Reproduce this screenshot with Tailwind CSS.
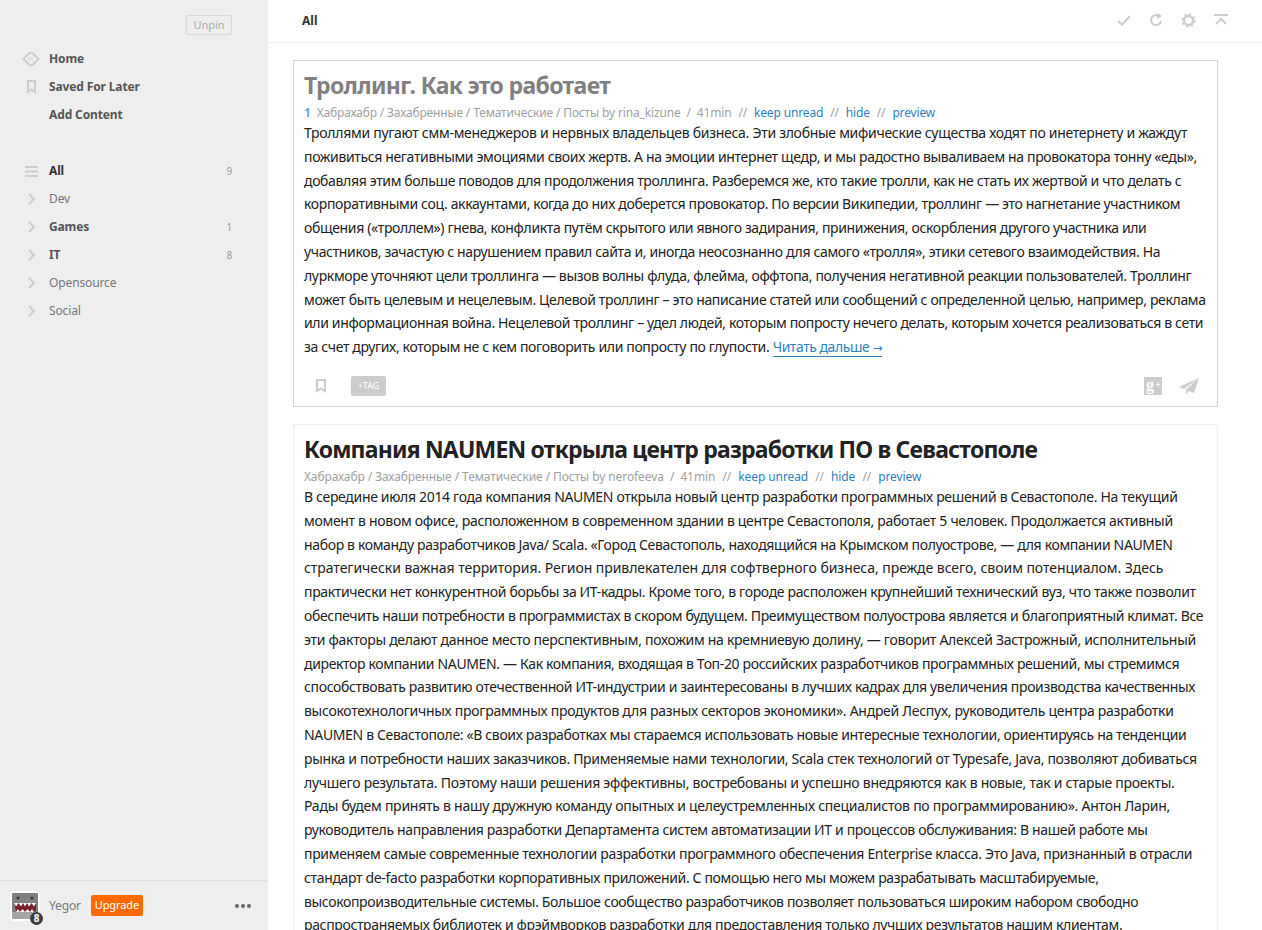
<!DOCTYPE html>
<html lang="ru">
<head>
    <meta charset="UTF-8">
    <title>Feedly</title>
    <script src="https://cdn.jsdelivr.net/npm/@tailwindcss/browser@4"></script>
</head>
<body class="h-screen overflow-hidden flex bg-white font-['Noto_Sans','Open_Sans',sans-serif] text-[#333]">

    <!-- sidebar -->
    <aside class="w-[268px] h-[930px] shrink-0 bg-[#eeeeee] flex flex-col">
        <div class="flex justify-end pr-[36px] pt-[15px]">
            <button class="w-[46px] h-[20px] border border-[#d9d9d9] rounded-[2px] text-[11px] leading-[18px] text-[#aaaaaa]">Unpin</button>
        </div>
        <nav class="mt-[10px] text-[12px] font-bold text-[#555555] tracking-[-0.13px]">
            <a class="flex items-center h-[28px]">
                <span class="w-[49px] flex justify-end pr-[9px]">
                    <svg width="18" height="16" viewBox="0 0 18 16" fill="none" stroke="#cccccc" stroke-width="1.8" stroke-linejoin="round"><path d="M1.500 8 7 2.500Q9 .7 11 2.500L16.500 8 11 13.500Q9 15.300 7 13.500z"/><path d="M8.500 5.500 6 8l2.500 2.500M11.500 5.500 9 8l2.500 2.500" stroke-width="1"/></svg>
                </span>
                Home
            </a>
            <a class="flex items-center h-[28px]">
                <span class="w-[49px] flex justify-end pr-[13px]">
                    <svg width="9" height="14" viewBox="0 0 9 14" fill="none" stroke="#cccccc" stroke-width="2"><path d="M1 1h7v11L4.500 9.500 1 12z"/></svg>
                </span>
                Saved For Later
            </a>
            <a class="flex items-center h-[28px] pl-[49px]">Add Content</a>
        </nav>
        <nav class="mt-[28px] text-[12px] text-[#777777] tracking-[-0.13px]">
            <a class="flex items-center h-[28px] font-bold text-[#333333]">
                <span class="w-[49px] flex justify-end pr-[11px]">
                    <svg width="13" height="11" viewBox="0 0 13 11" fill="#cccccc"><rect width="13" height="2" y="0"/><rect width="13" height="2" y="4.500"/><rect width="13" height="2" y="9"/></svg>
                </span>
                <span class="flex-1">All</span>
                <span class="pr-[36px] text-[10px] font-normal text-[#999999]">9</span>
            </a>
            <a class="flex items-center h-[28px]">
                <span class="w-[49px] flex justify-end pr-[13px]">
                    <svg width="8" height="12" viewBox="0 0 8 12" fill="none" stroke="#cccccc" stroke-width="2"><path d="m1 1 5 5-5 5"/></svg>
                </span>
                <span class="flex-1">Dev</span>
            </a>
            <a class="flex items-center h-[28px] font-bold text-[#555555]">
                <span class="w-[49px] flex justify-end pr-[13px]">
                    <svg width="8" height="12" viewBox="0 0 8 12" fill="none" stroke="#cccccc" stroke-width="2"><path d="m1 1 5 5-5 5"/></svg>
                </span>
                <span class="flex-1">Games</span>
                <span class="pr-[36px] text-[10px] font-normal text-[#999999]">1</span>
            </a>
            <a class="flex items-center h-[28px] font-bold text-[#555555]">
                <span class="w-[49px] flex justify-end pr-[13px]">
                    <svg width="8" height="12" viewBox="0 0 8 12" fill="none" stroke="#cccccc" stroke-width="2"><path d="m1 1 5 5-5 5"/></svg>
                </span>
                <span class="flex-1">IT</span>
                <span class="pr-[36px] text-[10px] font-normal text-[#999999]">8</span>
            </a>
            <a class="flex items-center h-[28px]">
                <span class="w-[49px] flex justify-end pr-[13px]">
                    <svg width="8" height="12" viewBox="0 0 8 12" fill="none" stroke="#cccccc" stroke-width="2"><path d="m1 1 5 5-5 5"/></svg>
                </span>
                <span class="flex-1">Opensource</span>
            </a>
            <a class="flex items-center h-[28px]">
                <span class="w-[49px] flex justify-end pr-[13px]">
                    <svg width="8" height="12" viewBox="0 0 8 12" fill="none" stroke="#cccccc" stroke-width="2"><path d="m1 1 5 5-5 5"/></svg>
                </span>
                <span class="flex-1">Social</span>
            </a>
        </nav>

        <!-- account -->
        <div class="mt-auto h-[50px] border-t border-[#e0e0e0] flex items-center pl-[10px] pr-[17px] text-[12px]">
            <div class="relative w-[30px] h-[30px] bg-white rounded-[3px] p-[2px]">
                <svg width="26" height="26" viewBox="0 0 26 26">
                    <rect width="26" height="26" rx="1" fill="#808080"/>
                    <rect y="19" width="26" height="7" fill="#a6a6a6"/>
                    <circle cx="6" cy="5" r="1.500" fill="#333333"/><circle cx="20" cy="5" r="1.500" fill="#333333"/>
                    <path d="M2 10h22v8l-3 1-2.500-1-2.500 1-2-1-2 1-2.500-1-2.500 1-3-1z" fill="#7a1f2b"/>
                    <path d="m2 10 2 3.500L6.500 10 9 13.500 11 10l2 3.500 2-3.500 2 3.500 2.500-3.500 2.500 3.500 2-3.500z" fill="#ffffff"/>
                    <path d="m4 19 2-3 2 3 2.500-3 2.500 3 2.500-3 2.500 3 2-3 2 3z" fill="#ffffff"/>
                </svg>
                <span class="absolute right-[-3px] bottom-[-4px] w-[13px] h-[13px] rounded-full bg-[#3d3d3d] text-white text-[10px] font-bold leading-[13px] text-center">8</span>
            </div>
            <span class="ml-[9px] text-[#777777] tracking-[-0.13px]">Yegor</span>
            <button class="ml-[10px] w-[52px] h-[21px] bg-[#ff6a00] rounded-[2px] text-white text-[11px] tracking-[-0.1px]">Upgrade</button>
            <span class="ml-auto flex gap-[2px]">
                <i class="w-[4px] h-[4px] rounded-full bg-[#666666]"></i>
                <i class="w-[4px] h-[4px] rounded-full bg-[#666666]"></i>
                <i class="w-[4px] h-[4px] rounded-full bg-[#666666]"></i>
            </span>
        </div>
    </aside>

    <!-- main column -->
    <main class="flex-1 min-w-0">
        <header class="h-[43px] border-b border-[#eeeeee] flex items-center pl-[34px] pr-[34px]">
            <h2 class="text-[12px] font-bold text-[#333333] -mt-[1px]">All</h2>
            <div class="ml-auto flex items-center gap-[18px] -mt-[2px]">
                <svg width="14" height="11" viewBox="0 0 14 11" fill="none" stroke="#cccccc" stroke-width="2"><path d="m1 6 4 3.500L13 1"/></svg>
                <svg width="14" height="14" viewBox="0 0 14 14" fill="none" stroke="#cccccc" stroke-width="2"><path d="M10.500 3.500A5 5 0 1 0 12 8"/><path d="M8 0v6l5-3z" fill="#cccccc" stroke="none"/></svg>
                <svg width="15" height="15" viewBox="0 0 15 15" fill="none" stroke="#cccccc"><circle cx="7.500" cy="7.500" r="4.500" stroke-width="2.400"/><circle cx="7.500" cy="7.500" r="6.200" stroke-width="2" stroke-dasharray="2 2.870"/></svg>
                <svg width="14" height="12" viewBox="0 0 14 12" fill="none" stroke="#cccccc" stroke-width="2"><path d="M0 1h14M2 10l5-5 5 5"/></svg>
            </div>
        </header>

        <div class="pl-[25px] pr-[44px] pt-[17px] flex flex-col gap-[17px]">
            <!-- first article, read -->
            <article class="h-[347px] border border-[#d5d5d5] pl-[10px] pr-[10px] relative">
                <h1 class="text-[23px] leading-[28px] font-bold text-[#808080] mt-[10px] tracking-[-0.65px]">Троллинг. Как это работает</h1>
                <div class="mt-[6px] text-[12px] leading-[16px] text-[#a0a0a0] whitespace-pre tracking-[-0.15px]"><span class="font-bold text-[#5aa6dc]">1</span>  Хабрахабр / Захабренные / Тематические / Посты by rina_kizune  /  41min  <span class="mx-[1px]">//</span>  <a class="text-[#2f7fc1]">keep unread</a>  <span class="mx-[1px]">//</span>  <a class="text-[#2f7fc1]">hide</a>  <span class="mx-[1px]">//</span>  <a class="text-[#2f7fc1]">preview</a></div>
                <div class="text-[14px] leading-[23.8px] tracking-[-0.35px] text-[#222222] whitespace-nowrap">
                    <span class="tracking-[-0.29px]">Троллями пугают смм-менеджеров и нервных владельцев бизнеса. Эти злобные мифические существа ходят по инетернету и жаждут</span><br>
                    поживиться негативными эмоциями своих жертв. А на эмоции интернет щедр, и мы радостно вываливаем на провокатора тонну «еды»,<br>
                    добавляя этим больше поводов для продолжения троллинга. Разберемся же, кто такие тролли, как не стать их жертвой и что делать с<br>
                    корпоративными соц. аккаунтами, когда до них доберется провокатор. По версии Википедии, троллинг — это нагнетание участником<br>
                    общения («троллем») гнева, конфликта путём скрытого или явного задирания, принижения, оскорбления другого участника или<br>
                    участников, зачастую с нарушением правил сайта и, иногда неосознанно для самого «тролля», этики сетевого взаимодействия. На<br>
                    луркморе уточняют цели троллинга — вызов волны флуда, флейма, оффтопа, получения негативной реакции пользователей. Троллинг<br>
                    может быть целевым и нецелевым. Целевой троллинг – это написание статей или сообщений с определенной целью, например, реклама<br>
                    или информационная война. Нецелевой троллинг – удел людей, которым попросту нечего делать, которым хочется реализоваться в сети<br>
                    за счет других, которым не с кем поговорить или попросту по глупости. <a class="text-[#2f7fc1] border-b border-[#2f7fc1] tracking-[-0.45px]">Читать дальше <span class="font-['DejaVu_Sans'] text-[12px]">→</span></a>
                </div>
                <div class="absolute left-[10px] right-[18px] top-[315px] flex items-center">
                    <svg class="ml-[12px]" width="10" height="14" viewBox="0 0 10 14" fill="none" stroke="#cccccc" stroke-width="2"><path d="M1 1h8v11L5 9.500 1 12z"/></svg>
                    <span class="ml-[25px] w-[35px] h-[20px] bg-[#cccccc] rounded-[2px] text-white text-[9px] leading-[20px] text-center">+TAG</span>
                    <svg class="ml-auto" width="18" height="18" viewBox="0 0 18 18"><rect width="18" height="18" fill="#cccccc"/><text x="2" y="13" font-size="16" font-family="Liberation Serif" font-weight="bold" fill="#ffffff">g</text><path d="M12 7.500h4M14 5.500v4" stroke="#ffffff"/></svg>
                    <svg class="ml-[17px]" width="20" height="16" viewBox="0 0 20 16" fill="#cccccc"><path d="M20 0 0 9l5 2zM20 0 7 11.500 7 16l3-3 5 2z"/></svg>
                </div>
            </article>

            <!-- second article -->
            <article class="border border-[#eeeeee] pl-[10px] pr-[10px]">
                <h1 class="text-[23px] leading-[28px] font-bold text-[#222222] mt-[10px] tracking-[-0.8px]">Компания NAUMEN открыла центр разработки ПО в Севастополе</h1>
                <div class="mt-[6px] text-[12px] leading-[16px] text-[#a0a0a0] whitespace-pre tracking-[-0.09px]">Хабрахабр / Захабренные / Тематические / Посты by nerofeeva  /  41min  <span class="mx-[1px]">//</span>  <a class="text-[#2f7fc1]">keep unread</a>  <span class="mx-[1px]">//</span>  <a class="text-[#2f7fc1]">hide</a>  <span class="mx-[1px]">//</span>  <a class="text-[#2f7fc1]">preview</a></div>
                <div class="text-[14px] leading-[23.8px] tracking-[-0.35px] text-[#222222] whitespace-nowrap">
                    <span class="tracking-[-0.325px]">В середине июля 2014 года компания NAUMEN открыла новый центр разработки программных решений в Севастополе. На текущий</span><br>
                    <span class="tracking-[-0.31px]">момент в новом офисе, расположенном в современном здании в центре Севастополя, работает 5 человек. Продолжается активный</span><br>
                    набор в команду разработчиков Java/ Scala. «Город Севастополь, находящийся на Крымском полуострове, — для компании NAUMEN<br>
                    <span class="tracking-[-0.05px]">стратегически важная территория. Регион привлекателен для софтверного бизнеса, прежде всего, своим потенциалом. Здесь</span><br>
                    практически нет конкурентной борьбы за ИТ-кадры. Кроме того, в городе расположен крупнейший технический вуз, что также позволит<br>
                    обеспечить наши потребности в программистах в скором будущем. Преимуществом полуострова является и благоприятный климат. Все<br>
                    <span class="tracking-[-0.29px]">эти факторы делают данное место перспективным, похожим на кремниевую долину, — говорит Алексей Застрожный, исполнительный</span><br>
                    директор компании NAUMEN. — Как компания, входящая в Топ-20 российских разработчиков программных решений, мы стремимся<br>
                    способствовать развитию отечественной ИТ-индустрии и заинтересованы в лучших кадрах для увеличения производства качественных<br>
                    <span class="tracking-[-0.28px]">высокотехнологичных программных продуктов для разных секторов экономики». Андрей Леспух, руководитель центра разработки</span><br>
                    NAUMEN в Севастополе: «В своих разработках мы стараемся использовать новые интересные технологии, ориентируясь на тенденции<br>
                    <span class="tracking-[-0.325px]">рынка и потребности наших заказчиков. Применяемые нами технологии, Scala стек технологий от Typesafe, Java, позволяют добиваться</span><br>
                    <span class="tracking-[-0.265px]">лучшего результата. Поэтому наши решения эффективны, востребованы и успешно внедряются как в новые, так и старые проекты.</span><br>
                    <span class="tracking-[-0.25px]">Рады будем принять в нашу дружную команду опытных и целеустремленных специалистов по программированию». Антон Ларин,</span><br>
                    руководитель направления разработки Департамента систем автоматизации ИТ и процессов обслуживания: В нашей работе мы<br>
                    <span class="tracking-[-0.32px]">применяем самые современные технологии разработки программного обеспечения Enterprise класса. Это Java, признанный в отрасли</span><br>
                    стандарт de-facto разработки корпоративных приложений. С помощью него мы можем разрабатывать масштабируемые,<br>
                    высокопроизводительные системы. Большое сообщество разработчиков позволяет пользоваться широким набором свободно<br>
                    распространяемых библиотек и фрэймворков разработки для предоставления только лучших результатов нашим клиентам.
                </div>
            </article>
        </div>
    </main>
</body>
</html>
